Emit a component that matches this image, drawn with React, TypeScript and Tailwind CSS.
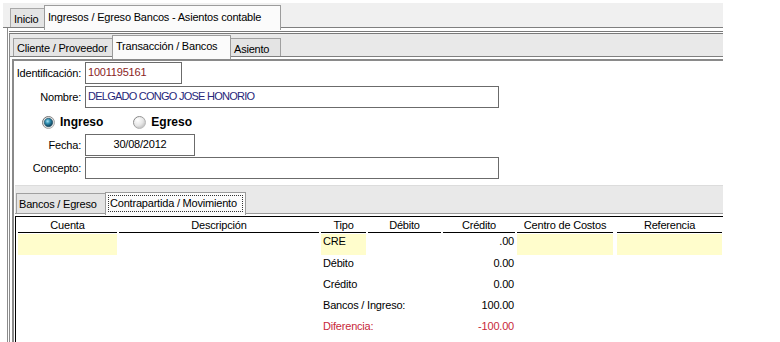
import React from "react";

function RadioOn() {
  return (
    <svg width="13" height="13" viewBox="0 0 13 13">
      <defs>
        <radialGradient id="rgOn" cx="40%" cy="35%" r="65%">
          <stop offset="0" stopColor="#a8e4f4" />
          <stop offset="0.45" stopColor="#2f8db0" />
          <stop offset="1" stopColor="#0c3a52" />
        </radialGradient>
        <linearGradient id="ringOn" x1="0" y1="0" x2="1" y2="1">
          <stop offset="0" stopColor="#5f5f5f" />
          <stop offset="1" stopColor="#bdbdbd" />
        </linearGradient>
      </defs>
      <circle cx="6.5" cy="6.5" r="6" fill="#e2e2e2" stroke="url(#ringOn)" strokeWidth="1" />
      <circle cx="6.5" cy="6.5" r="4.2" fill="url(#rgOn)" stroke="#1d4f66" strokeWidth="0.6" />
    </svg>
  );
}

function RadioOff() {
  return (
    <svg width="13" height="13" viewBox="0 0 13 13">
      <defs>
        <radialGradient id="rgOff" cx="35%" cy="30%" r="75%">
          <stop offset="0" stopColor="#ffffff" />
          <stop offset="0.6" stopColor="#e6e6e6" />
          <stop offset="1" stopColor="#bcbcbc" />
        </radialGradient>
        <linearGradient id="ringOff" x1="0" y1="0" x2="1" y2="1">
          <stop offset="0" stopColor="#777777" />
          <stop offset="1" stopColor="#cfcfcf" />
        </linearGradient>
      </defs>
      <circle cx="6.5" cy="6.5" r="6" fill="url(#rgOff)" stroke="url(#ringOff)" strokeWidth="1" />
    </svg>
  );
}

const rows = [
  { tipo: "Débito", val: "0.00", red: false },
  { tipo: "Crédito", val: "0.00", red: false },
  { tipo: "Bancos / Ingreso:", val: "100.00", red: false },
  { tipo: "Diferencia:", val: "-100.00", red: true },
];

export default function App() {
  return (
    <div className="w-[780px] h-[342px] bg-white overflow-hidden font-[Liberation_Sans,Arial,sans-serif] text-[11px] leading-[13px] tracking-[-0.2px] text-black">
      <div className="pt-[3px] pl-[3px] w-[723px]">
        {/* outer tab strip */}
        <div className="h-[25px] bg-[#f0f0f0] border-b border-[#7f7f7f] flex items-end pl-[7px]">
          <div className="h-[19px] w-[34px] bg-[#e4e4e4] border-t border-l border-[#a8a8a8] pl-[3px] pt-[4px]">Inicio</div>
          <div className="relative z-10 h-[25px] w-[237px] mb-[-3px] bg-[#fbfbfb] border-t border-l border-r border-[#9c9c9c] pl-[3px] pt-[5px] whitespace-nowrap">
            Ingresos / Egreso Bancos - Asientos contable
          </div>
        </div>

        {/* outer panel */}
        <div className="ml-[4px] border-l border-[#8c8c8c] pt-[3px]">
          <div className="ml-[1px] border-t-[3px] border-double border-l-0 border-r-0 border-b-0 border-[#7a7a7a]">
            <div className="border-l border-[#8a8a8a]">
              {/* inner tab strip */}
              <div className="h-[23px] bg-[#e9e9e9] border-b border-[#7f7f7f] flex items-end pl-[3px]">
                <div className="h-[18px] w-[99px] bg-[#e4e4e4] border-t border-l border-[#a0a0a0] pl-[3px] pt-[3px] whitespace-nowrap">Cliente / Proveedor</div>
                <div className="relative z-10 h-[24px] w-[119px] mb-[-3px] bg-[#fbfbfb] border-t border-l border-r border-[#9c9c9c] pl-[3px] pt-[4px] whitespace-nowrap">
                  Transacción / Bancos
                </div>
                <div className="h-[18px] w-[50px] bg-[#e4e4e4] border-t border-r border-[#a0a0a0] pl-[3px] pt-[4px]">Asiento</div>
              </div>

              {/* inner panel */}
              <div className="mt-[2px] ml-[2px] border-t-2 border-l-2 border-[#8a8a8a] h-[290px] pt-[1px]">
                {/* Identificación */}
                <div className="flex items-center">
                  <div className="w-[68px] text-right pr-[1px] whitespace-nowrap">Identificación:</div>
                  <div className="ml-[3px] w-[97px] h-[22px] border border-[#6b6b6b] pl-[2px] pt-[3px] text-[#8a2424]">1001195161</div>
                </div>
                {/* Nombre */}
                <div className="flex items-center mt-[2px]">
                  <div className="w-[68px] text-right pr-[1px]">Nombre:</div>
                  <div className="ml-[3px] w-[414px] h-[22px] border border-[#6b6b6b] pl-[2px] pt-[3px] text-[#27277a] tracking-[-0.75px]">
                    DELGADO CONGO JOSE HONORIO
                  </div>
                </div>
                {/* radios */}
                <div className="h-[26px] pt-[3px] flex items-center pl-[28px] font-bold text-[12px] tracking-normal">
                  <div className="flex items-center">
                    <RadioOn />
                    <span className="ml-[5px]">Ingreso</span>
                  </div>
                  <div className="flex items-center ml-[30px]">
                    <RadioOff />
                    <span className="ml-[5px]">Egreso</span>
                  </div>
                </div>
                {/* Fecha */}
                <div className="flex items-center">
                  <div className="w-[68px] text-right pr-[1px]">Fecha:</div>
                  <div className="ml-[3px] w-[110px] h-[22px] border border-[#6b6b6b] pt-[3px] text-center">30/08/2012</div>
                </div>
                {/* Concepto */}
                <div className="flex items-center mt-[1px]">
                  <div className="w-[68px] text-right pr-[1px]">Concepto:</div>
                  <div className="ml-[3px] w-[414px] h-[22px] border border-[#6b6b6b]"></div>
                </div>

                {/* bottom tab control */}
                <div className="mt-[6px] ml-[1px]">
                  <div className="h-[29px] bg-[#e9e9e9] border-t border-[#dcdcdc] border-b border-b-[#9a9a9a] flex items-end pl-[1px]">
                    <div className="h-[20px] w-[89px] bg-[#e4e4e4] border-t border-l border-[#a0a0a0] pl-[2px] pt-[4px] whitespace-nowrap">Bancos / Egreso</div>
                    <div className="relative z-10 h-[23px] w-[141px] mb-[-2px] bg-[#fbfbfb] border-t border-l border-r border-[#9c9c9c] p-[2px]">
                      <div className="border border-dotted border-[#333] h-[17px] pl-[1px] pt-[1px] whitespace-nowrap">Contrapartida / Movimiento</div>
                    </div>
                  </div>

                  {/* table */}
                  <div className="mt-[2px] border-t border-l border-black h-[130px]">
                    {/* header */}
                    <div className="flex h-[16px]">
                      <div className="ml-[2px] w-[99px] border-b border-black text-center pt-[2px]">Cuenta</div>
                      <div className="ml-[2px] w-[200px] border-b border-black text-center pt-[2px]">Descripción</div>
                      <div className="ml-[2px] w-[45px] border-b border-black text-center pt-[2px]">Tipo</div>
                      <div className="ml-[2px] w-[73px] border-b border-black text-center pt-[2px]">Débito</div>
                      <div className="ml-[2px] w-[72px] border-b border-black text-center pt-[2px]">Crédito</div>
                      <div className="ml-[2px] w-[96px] border-b border-black text-center pt-[2px] whitespace-nowrap">Centro de Costos</div>
                      <div className="ml-[4px] w-[105px] border-b border-black text-center pt-[2px]">Referencia</div>
                    </div>
                    {/* first row */}
                    <div className="flex h-[21px] mt-[1px]">
                      <div className="ml-[2px] w-[99px] bg-[#fffdcc]"></div>
                      <div className="ml-[2px] w-[200px]"></div>
                      <div className="ml-[2px] w-[45px] bg-[#fffdcc] pl-[2px] pt-[1px]">CRE</div>
                      <div className="ml-[2px] w-[73px]"></div>
                      <div className="ml-[2px] w-[72px] text-right pr-[1px] pt-[1px]">.00</div>
                      <div className="ml-[2px] w-[96px] bg-[#fffdcc]"></div>
                      <div className="ml-[4px] w-[105px] bg-[#fffdcc]"></div>
                    </div>
                    {rows.map((r) => (
                      <div key={r.tipo} className="flex h-[21px]">
                        <div className="ml-[2px] w-[99px]"></div>
                        <div className="ml-[2px] w-[200px]"></div>
                        <div className={r.red ? "ml-[2px] w-[45px] pl-[2px] pt-[2px] whitespace-nowrap text-[#c8283a]" : "ml-[2px] w-[45px] pl-[2px] pt-[2px] whitespace-nowrap"}>{r.tipo}</div>
                        <div className="ml-[2px] w-[73px]"></div>
                        <div className={r.red ? "ml-[2px] w-[72px] text-right pr-[1px] pt-[2px] text-[#c8283a]" : "ml-[2px] w-[72px] text-right pr-[1px] pt-[2px]"}>{r.val}</div>
                      </div>
                    ))}
                  </div>
                </div>
              </div>
            </div>
          </div>
        </div>
      </div>
    </div>
  );
}
